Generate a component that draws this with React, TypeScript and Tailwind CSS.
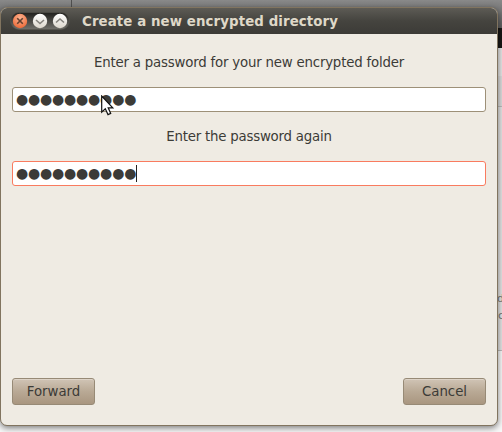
import { useState } from 'react';

function WindowControls() {
  return (
    <svg width="60" height="18" viewBox="0 0 60 18" className="shrink-0">
      <defs>
        <linearGradient id="pill" x1="0" y1="0" x2="0" y2="1">
          <stop offset="0" stopColor="#21201d" />
          <stop offset="1" stopColor="#72716b" />
        </linearGradient>
        <linearGradient id="light" x1="0" y1="0" x2="0" y2="1">
          <stop offset="0" stopColor="#ffffff" />
          <stop offset="1" stopColor="#dcd7cc" />
        </linearGradient>
        <radialGradient id="orange" cx="0.5" cy="0.3" r="0.7">
          <stop offset="0" stopColor="#fbb290" />
          <stop offset="1" stopColor="#ee6a38" />
        </radialGradient>
      </defs>
      <rect x="0.5" y="0.5" width="59" height="17" rx="8.5" fill="url(#pill)" stroke="#55534c" strokeOpacity="0.6" />
      <circle cx="10" cy="9" r="7.2" fill="url(#orange)" />
      <circle cx="30" cy="9" r="7.2" fill="url(#light)" />
      <circle cx="50" cy="9" r="7.2" fill="url(#light)" />
      <path d="M7.2 6.2 L12.8 11.8 M12.8 6.2 L7.2 11.8" stroke="#63402f" strokeWidth="1.6" />
      <path d="M26 8 L30 11.5 L34 8" fill="none" stroke="#85837d" strokeWidth="1.6" />
      <path d="M46 10.5 L50 7 L54 10.5" fill="none" stroke="#85837d" strokeWidth="1.6" />
    </svg>
  );
}

function PasswordField({ value, onChange, focused }: { value: string; onChange: (v: string) => void; focused?: boolean }) {
  return (
    <div
      className={`relative h-[25px] w-full rounded-[3px] border bg-white ${focused ? 'border-[#f97b5f]' : 'border-[#9d9078]'}`}
    >
      <input
        value={value}
        onChange={e => onChange(e.target.value)}
        className="block h-[23px] w-full bg-transparent pl-[3px] text-[14px] leading-[23px] tracking-[-0.2px] outline-none"
      />
      {focused && <span className="absolute left-[123px] top-[3px] h-[17px] w-px bg-[#222]" />}
    </div>
  );
}

function DialogButton({ label }: { label: string }) {
  return (
    <button className="h-[27px] w-[83px] rounded-[3px] border border-[#978a76] bg-gradient-to-b from-[#d0c4b5] via-[#b9a995] to-[#a99680] pt-px text-center leading-6 shadow-[inset_0_1px_0_#ddd3c7]">
      {label}
    </button>
  );
}

export default function App() {
  const [password, setPassword] = useState('●●●●●●●●●●');
  const [confirm, setConfirm] = useState('●●●●●●●●●●');

  return (
    <div className="relative h-[432px] w-[502px] overflow-hidden bg-[#e9e9e9] font-['DejaVu_Sans',sans-serif] text-[13.33px] text-[#3c3b37]">
      {/* desktop behind the dialog */}
      <div className="absolute inset-0 flex flex-col">
        <div className="flex h-7 bg-gradient-to-b from-[#898989] to-[#5b5b5b]">
          <div className="w-[72px] border-r border-[#505050]" />
        </div>
        <div className="h-5 bg-[#181715]" />
        <div className="h-[28px] bg-[#e6e6e6]" />
        <div className="h-[31px] border-b border-[#bbbbbb] bg-[#dcdcdc]" />
        <div className="h-[244px] border-b border-[#bbbbbb] bg-[#e4e4e4] pt-[183px] text-right text-[11px] leading-[17px] text-[#777]">
          <div className="-mr-0.5">d</div>
          <div className="-mr-0.5">c</div>
        </div>
        <div className="flex-1 bg-[#f8f8f8]" />
      </div>

      <div className="relative mt-[7px] flex h-[419px] w-[498px] flex-col overflow-hidden rounded-[7px] border border-[#81745f] bg-[#efebe3] shadow-[0_2px_6px_rgba(0,0,0,0.5)]">
        <div className="flex h-[26px] shrink-0 items-center bg-gradient-to-b from-[#5d5b55] via-[#45443f] to-[#3c3b37] pl-[9px]">
          <WindowControls />
          <h1 className="ml-3 whitespace-nowrap pt-px text-[13.33px] font-bold tracking-[0.1px] text-[#dfd8c8]">
            Create a new encrypted directory
          </h1>
        </div>

        <div className="flex flex-1 flex-col px-[11px] pb-5">
          <p className="h-[53px] pt-[19px] text-center leading-5 tracking-[-0.2px]">Enter a password for your new encrypted folder</p>
          <PasswordField value={password} onChange={setPassword} />
          <p className="h-[49px] pt-[15px] text-center leading-5 tracking-[-0.22px]">Enter the password again</p>
          <PasswordField value={confirm} onChange={setConfirm} focused />
          <div className="mt-auto flex justify-between">
            <DialogButton label="Forward" />
            <DialogButton label="Cancel" />
          </div>
        </div>
      </div>

      {/* mouse pointer */}
      <svg width="14" height="22" viewBox="0 0 14 22" className="absolute left-[101px] top-[95px]">
        <path d="M0.7 1 V17.2 L4.3 13.8 L7 19.6 L9.7 18.4 L7.2 12.8 H11.8 Z" fill="#fff" stroke="#111" strokeWidth="1.2" />
      </svg>
    </div>
  );
}
